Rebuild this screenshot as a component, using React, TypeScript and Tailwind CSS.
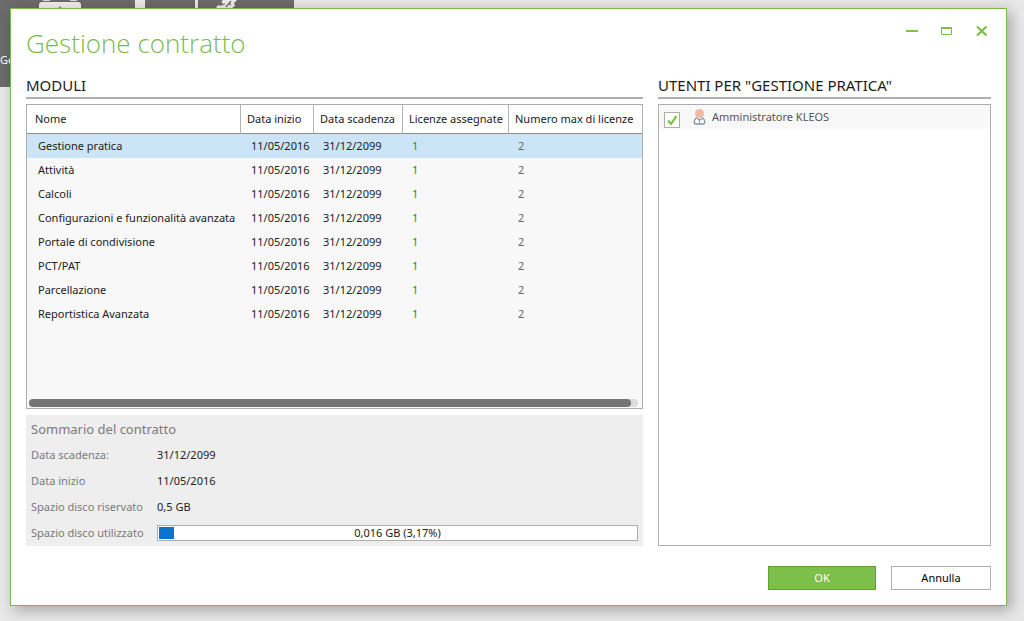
import React, { useState } from 'react';

const modules = [
  'Gestione pratica',
  'Attività',
  'Calcoli',
  'Configurazioni e funzionalità avanzata',
  'Portale di condivisione',
  'PCT/PAT',
  'Parcellazione',
  'Reportistica Avanzata',
];

const START = '11/05/2016';
const END = '31/12/2099';

function Backdrop() {
  return (
    <div aria-hidden="true" className="absolute top-0 left-0 h-[87px] w-[294px] overflow-hidden bg-[#6b6b6b]">
      <svg className="absolute top-0 left-0" width="294" height="12" viewBox="0 0 294 12">
        <path d="M43 0h7v1h-7zM70 0h7v1h-7z" fill="#ddd" />
        <rect x="39" y="2" width="42" height="12" rx="3" fill="#eee" />
        <circle cx="60" cy="8" r="1.500" fill="#888" />
        <rect x="135" y="0" width="10" height="12" fill="#eaeaea" />
        <rect x="195" y="0" width="3" height="12" fill="#eaeaea" />
        <path d="M216 8l2-3 3 1 2-3-2-1 2-2h14l-3 3 1 3-3 2z" fill="#eee" />
        <path d="M222 5l3-1M226 7l5-6M229 3l2 2" stroke="#6b6b6b" strokeWidth="1.200" />
      </svg>
      <span className="absolute top-[52px] left-0 text-[11px] leading-4 text-white">Ge</span>
    </div>
  );
}

function UserIcon() {
  return (
    <svg width="13" height="16" viewBox="0 0 13 16" aria-hidden="true">
      <circle cx="6.5" cy="4.500" r="4.500" fill="#f3b9a4" />
      <path d="M3.400 8.800C1.800 10 1.200 11.500 1.200 13c0 1.300.8 2 2.200 2h6.200c1.400 0 2.200-.7 2.200-2 0-1.500-.6-3-2.200-4.200" fill="#fff" stroke="#8194a3" strokeWidth="1.300" />
      <path d="M3.400 8.800l3.100 2.500 3.100-2.500M6.500 11v3" fill="none" stroke="#8194a3" strokeWidth="1.200" />
    </svg>
  );
}

function SectionTitle({ children }: { children: React.ReactNode }) {
  return (
    <h2 className="mb-[5px] border-b-2 border-[#b0b0b0] pb-0.5 text-[15px] leading-5 text-[#1c1c1c]">{children}</h2>
  );
}

function SummaryRow({ label, children }: { label: string; children: React.ReactNode }) {
  return (
    <div className="flex h-[26px] items-center">
      <dt className="w-[126px] shrink-0 whitespace-nowrap text-[#7a7a7a]">{label}</dt>
      <dd className="min-w-0 flex-1">{children}</dd>
    </div>
  );
}

export default function App() {
  const [selected, setSelected] = useState(0);
  const [checked, setChecked] = useState(true);
  const used = 3.17;

  return (
    <div className="relative flex min-h-screen flex-col bg-[#e8e8e8] pt-2 pr-[17px] pb-[15px] pl-2.5 font-['Noto_Sans','Open_Sans',sans-serif] text-[11px] leading-4 text-[#222]">
      <Backdrop />
      <main
        role="dialog"
        aria-labelledby="dialog-title"
        className="relative flex flex-1 flex-col border border-[#7cb84a] bg-white px-[15px] pb-[15px] shadow-[4px_4px_14px_rgba(0,0,0,0.3)]"
      >
        <header className="flex h-[66px] items-start justify-between">
          <h1 id="dialog-title" className="pt-4 font-['Open_Sans',sans-serif] text-[26px] leading-9 font-light text-[#7cbb4c]">
            Gestione contratto
          </h1>
          <div className="flex gap-[23px] pt-4 pr-[3px] text-[#7cbf43]">
            <button type="button" aria-label="Riduci a icona">
              <svg width="12" height="12" viewBox="0 0 12 12"><path d="M0 6h12" stroke="currentColor" strokeWidth="2" /></svg>
            </button>
            <button type="button" aria-label="Ingrandisci">
              <svg width="12" height="12" viewBox="0 0 12 12"><path d="M.5 3v6.500h10V3" fill="none" stroke="currentColor" /><path d="M0 3h11" stroke="currentColor" strokeWidth="2" /></svg>
            </button>
            <button type="button" aria-label="Chiudi">
              <svg width="12" height="12" viewBox="0 0 12 12"><path d="M1 1.500l9.500 9M10.500 1.500l-9.500 9" stroke="currentColor" strokeWidth="2.200" /></svg>
            </button>
          </div>
        </header>

        <div className="grid flex-1 grid-cols-[617fr_333fr] gap-[15px]">
          <section className="flex min-w-0 flex-col">
            <SectionTitle>MODULI</SectionTitle>
            <div className="flex flex-1 flex-col border border-[#adadad] bg-[#f8f8f8]">
              <table className="w-full table-fixed border-separate border-spacing-0 whitespace-nowrap">
                <colgroup>
                  <col />
                  <col className="w-[73px]" />
                  <col className="w-[89px]" />
                  <col className="w-[106px]" />
                  <col className="w-[133px]" />
                </colgroup>
                <thead>
                  <tr className="h-[29px] bg-white text-left [&>th]:border-b [&>th]:border-b-[#8c8c8c] [&>th]:p-0 [&>th]:pl-1.5 [&>th]:font-normal">
                    <th className="border-r border-r-[#b5b5b5]"><span className="pl-0.5">Nome</span></th>
                    <th className="border-r border-r-[#b5b5b5]">Data inizio</th>
                    <th className="border-r border-r-[#b5b5b5]">Data scadenza</th>
                    <th className="border-r border-r-[#b5b5b5]">Licenze assegnate</th>
                    <th>Numero max di licenze</th>
                  </tr>
                </thead>
                <tbody>
                  {modules.map((name, i) => (
                    <tr
                      key={name}
                      onClick={() => setSelected(i)}
                      className={i === selected ? 'h-6 bg-[#cce5f6]' : 'h-6'}
                    >
                      <td className="p-0 pl-[11px]">{name}</td>
                      <td className="p-0 pl-[10px]">{START}</td>
                      <td className="p-0 pl-[9px]">{END}</td>
                      <td className="p-0 pl-[9px] text-[#139a13]">1</td>
                      <td className="p-0 pl-[9px] text-[#666]">2</td>
                    </tr>
                  ))}
                </tbody>
              </table>
              <div className="mt-auto mr-1 mb-px ml-0.5 h-2 rounded-full bg-[#dcdcdc]">
                <div className="mr-[7px] h-2 rounded-full bg-[#757575]" />
              </div>
            </div>
            <div className="mt-1.5 bg-[#eee] px-[5px] pt-px">
              <h3 className="flex h-[26px] items-center text-[13px] text-[#7a7a7a]">Sommario del contratto</h3>
              <dl>
                <SummaryRow label="Data scadenza:">{END}</SummaryRow>
                <SummaryRow label="Data inizio">{START}</SummaryRow>
                <SummaryRow label="Spazio disco riservato">0,5 GB</SummaryRow>
                <SummaryRow label="Spazio disco utilizzato">
                  <div className="grid h-4 border border-[#adadad] bg-white p-px">
                    <div className="col-start-1 row-start-1 bg-[#0a74cf]" style={{ width: `${used}%` }} />
                    <span className="col-start-1 row-start-1 text-center leading-3">0,016 GB (3,17%)</span>
                  </div>
                </SummaryRow>
              </dl>
            </div>
          </section>

          <section className="flex min-w-0 flex-col">
            <SectionTitle>UTENTI PER "GESTIONE PRATICA"</SectionTitle>
            <div className="flex-1 border border-[#adadad]">
              <label className="flex h-6 items-center bg-[#f8f8f8] pl-[5px] text-[#555]">
                <span className="mt-1.5 grid">
                  <input
                    type="checkbox"
                    checked={checked}
                    onChange={(e) => setChecked(e.target.checked)}
                    className="peer col-start-1 row-start-1 size-4 appearance-none border border-[#adadad] bg-white"
                  />
                  <svg className="pointer-events-none invisible col-start-1 row-start-1 size-4 peer-checked:visible" viewBox="0 0 16 16">
                    <path d="M4 8.500l3 3.500 5.500-8" fill="none" stroke="#7cc044" strokeWidth="2.200" />
                  </svg>
                </span>
                <span className="mr-1.5 ml-[13px]"><UserIcon /></span>
                Amministratore KLEOS
              </label>
            </div>
          </section>
        </div>

        <footer className="mt-5 flex justify-end gap-[15px]">
          <button type="button" className="h-6 w-[108px] border border-[#5fa032] bg-[#7cc04b] text-white">OK</button>
          <button type="button" className="h-6 w-[100px] border border-[#adadad] bg-white text-black">Annulla</button>
        </footer>
      </main>
    </div>
  );
}
